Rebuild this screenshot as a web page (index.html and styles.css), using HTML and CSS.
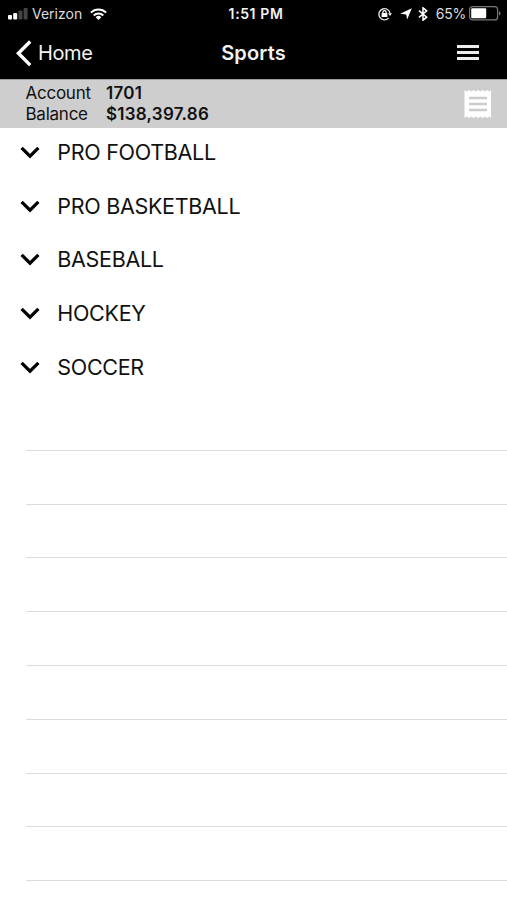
FILE: index.html
```html
<!DOCTYPE html>
<html lang="en">
<head>
<meta charset="utf-8">
<title>Sports</title>
<link rel="stylesheet" href="styles.css">
</head>
<body>
<header class="top">
  <div class="status">
    <div class="status-left">
      <svg class="signal" width="20" height="12" viewBox="0 0 20 12"><g fill="#fff"><rect x="0" y="7" width="4" height="4.5" rx="1"/><rect x="5.2" y="5" width="4" height="6.5" rx="1"/></g><g fill="#444"><rect x="10.4" y="2.5" width="4" height="9" rx="1"/><rect x="15.6" y="0" width="4" height="11.5" rx="1"/></g></svg>
      <span class="carrier">Verizon</span>
      <svg class="wifi" width="17" height="12" viewBox="0 0 17 12"><g fill="none" stroke="#fff" stroke-width="2"><path d="M.9 4.6a10.8 10.8 0 0 1 15.2 0"/><path d="M3.7 7.5a6.8 6.8 0 0 1 9.6 0"/></g><path d="M5.7 9.2a4 4 0 0 1 5.6 0L8.5 12z" fill="#fff"/></svg>
    </div>
    <span class="time">1:51 PM</span>
    <div class="status-right">
      <svg width="14" height="14" viewBox="0 0 14 14"><path d="M10.6 11.1A5.6 5.6 0 1 1 12.1 6.6" fill="none" stroke="#ddd" stroke-width="1.4"/><path d="M10 6.3h4L12 9z" fill="#eee"/><rect x="3.6" y="6" width="5.8" height="4" rx=".5" fill="#fff"/><path d="M4.9 6.5V5.2a1.6 1.6 0 0 1 3.2 0v1.3" fill="none" stroke="#fff" stroke-width="1.2"/></svg>
      <svg class="locate" width="12" height="12" viewBox="0 0 12 12"><path d="M11.8.2L7.2 11.6 6.2 6.4.2 5.8z" fill="#fff"/></svg>
      <svg class="bluetooth" width="10" height="14" viewBox="0 0 10 14"><path d="M1 3.6l7.7 6.6L5 13.2V.8l3.7 3L1 10.4" fill="none" stroke="#fff" stroke-width="1.5"/></svg>
      <span class="percent">65%</span>
      <svg class="battery" width="32" height="15" viewBox="0 0 32 15"><rect x=".6" y=".6" width="28" height="13.3" rx="3" fill="none" stroke="#777" stroke-width="1.2"/><rect x="2.2" y="2.2" width="15" height="10.1" rx="1" fill="#fff"/><path d="M30 5q1.5.8 1.5 2.3T30 9.6z" fill="#777"/></svg>
    </div>
  </div>
  <nav class="nav">
    <a class="back"><svg width="16" height="27" viewBox="0 0 16 27"><path d="M14.2 1.5L2.4 13.3l11.8 11.8" fill="none" stroke="#fff" stroke-width="3.4"/></svg><span class="home">Home</span></a>
    <h1 class="title">Sports</h1>
    <div class="menu"><i></i><i></i><i></i></div>
  </nav>
</header>
<section class="account">
  <dl class="details">
    <dt class="account-label">Account</dt><dd class="number">1701</dd>
    <dt class="balance-label">Balance</dt><dd class="amount">$138,397.86</dd>
  </dl>
  <svg class="receipt" width="28" height="30" viewBox="0 0 28 30"><path d="M.5 1l2.25 1.5L5 1l2.25 1.5L9.5 1l2.25 1.5L14 1l2.25 1.5L18.5 1l2.25 1.5L23 1l2.25 1.5L27 1v28l-1.75-1.5L23 29l-2.25-1.5L18.5 29l-2.25-1.5L14 29l-2.25-1.5L9.5 29l-2.25-1.5L5 29l-2.25-1.5L.5 29z" fill="#fff"/><path d="M5 9h18M5 15h18M5 21h18" stroke="#ccc" stroke-width="2.6"/></svg>
</section>
<ul class="sports">
  <li><svg class="chevron" viewBox="0 0 20 13"><path d="M1.6 1.8L10 10.2l8.4-8.4"/></svg><span class="football">PRO FOOTBALL</span></li>
  <li><svg class="chevron" viewBox="0 0 20 13"><path d="M1.6 1.8L10 10.2l8.4-8.4"/></svg><span class="basketball">PRO BASKETBALL</span></li>
  <li><svg class="chevron" viewBox="0 0 20 13"><path d="M1.6 1.8L10 10.2l8.4-8.4"/></svg><span class="baseball">BASEBALL</span></li>
  <li><svg class="chevron" viewBox="0 0 20 13"><path d="M1.6 1.8L10 10.2l8.4-8.4"/></svg><span class="hockey">HOCKEY</span></li>
  <li><svg class="chevron" viewBox="0 0 20 13"><path d="M1.6 1.8L10 10.2l8.4-8.4"/></svg><span class="soccer">SOCCER</span></li>
</ul>
<div class="empty"><div></div><div></div><div></div><div></div><div></div><div></div><div></div><div></div><div></div></div>
</body>
</html>
```
FILE: styles.css
```css
* { box-sizing: border-box; }
body { margin: 0; height: 900px; overflow: hidden; background: #fff; color: #111; font-family: Inter, "Liberation Sans", sans-serif; }
svg { display: block; flex: none; }
.top { height: 79px; background: #000; color: #f2f2f2; }
.status { height: 27px; display: grid; grid-template-columns: 1fr auto 1fr; align-items: center; padding: 0 6px 0 8px; font-size: 14px; line-height: 18px; }
.status-left, .status-right { display: flex; align-items: center; }
.status-right { justify-content: flex-end; }
.carrier { margin-left: 4px; color: #ddd; }
.wifi { margin-left: 8px; }
.time { margin: 0 -1.5px 0 1.5px; font-size: 14px; font-weight: 600; letter-spacing: .6px; }
.locate { margin-left: 8px; }
.bluetooth { margin-left: 6px; }
.percent { margin-left: 8px; color: #ddd; letter-spacing: -.2px; }
.battery { margin-left: 3px; }
.nav { height: 52px; display: grid; grid-template-columns: 1fr auto 1fr; align-items: center; padding: 0 28px 0 16px; }
.back { display: flex; align-items: center; gap: 6px; font-size: 20px; line-height: 26px; }
.home { letter-spacing: -.4px; }
.title { margin: 0 -6px 0 6px; font-size: 20px; line-height: 26px; font-weight: 600; letter-spacing: .1px; }
.menu { justify-self: end; width: 22px; display: grid; gap: 3px; margin-bottom: 2px; }
.menu i { height: 3px; background: #eee; }
.account { height: 49px; display: flex; justify-content: space-between; align-items: center; padding: 0 15px 0 25.5px; background: #cecece; border-top: 1px solid #999; }
.details { margin: 0; display: grid; grid-template-columns: 80.5px auto; font-size: 17px; line-height: 21px; letter-spacing: -.25px; }
.details dd { margin: 0; font-weight: 600; letter-spacing: .25px; }
.sports { list-style: none; margin: 0; padding: 0; height: 295px; }
.sports li { height: 53.75px; padding: 0 0 5px 20px; display: flex; align-items: center; font-size: 21.5px; line-height: 26px; letter-spacing: -.3px; white-space: nowrap; }
.sports span { margin-top: -1px; }
.chevron { width: 20px; height: 13px; margin-right: 17.3px; fill: none; stroke: #000; stroke-width: 3.2; }
.empty { margin-left: 26px; }
.empty div { height: 53.8px; border-bottom: 1px solid #dcdcdc; }
.empty div:first-child { height: 27.9px; }
```
